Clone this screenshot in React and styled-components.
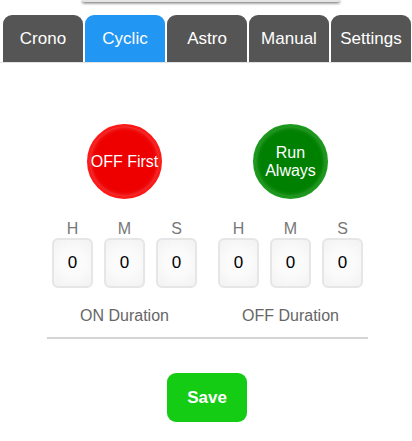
import React from 'react';
import styled, { createGlobalStyle } from 'styled-components';

const GlobalStyle = createGlobalStyle`
  html, body {
    margin: 0;
    padding: 0;
    background: #fff;
    font-family: "Liberation Sans", Arial, sans-serif;
  }
`;

const Page = styled.div`
  width: 412px;
  min-height: 441px;
  overflow: hidden;
`;

const TopBar = styled.div`
  margin-left: 82px;
  width: 258px;
  height: 2px;
  background: #e4e4e4;
  border-radius: 0 0 6px 6px;
  box-shadow: 0 1px 3px rgba(0, 0, 0, 0.75);
`;

const TabBar = styled.div`
  display: flex;
  gap: 2px;
  padding-left: 3px;
  margin-top: 13px;
  border-bottom: 1px solid #e2e2e2;
`;

const Tab = styled.div`
  width: 80px;
  height: 47px;
  flex: none;
  display: flex;
  align-items: center;
  justify-content: center;
  background: ${(p) => (p.$active ? '#2196f3' : '#555555')};
  color: #fff;
  font-size: 17px;
  border-radius: 9px 9px 0 0;
`;

const Content = styled.div`
  display: flex;
  flex-direction: column;
  align-items: center;
  padding-top: 61px;
`;

const Columns = styled.div`
  display: flex;
  gap: 21px;
  margin-left: 3px;
`;

const Column = styled.div`
  width: 145px;
  display: flex;
  flex-direction: column;
  align-items: center;
`;

const Circle = styled.div`
  width: 75px;
  height: 75px;
  box-sizing: border-box;
  border-radius: 50%;
  display: flex;
  align-items: center;
  justify-content: center;
  text-align: center;
  color: #fff;
  font-size: 16px;
  line-height: 18px;
  background: ${(p) => p.$bg};
  border: 2px solid ${(p) => p.$ring};
  box-shadow: inset 0 0 4px 1px ${(p) => p.$glow};
  margin-bottom: 21px;
`;

const Fields = styled.div`
  display: flex;
  gap: 11px;
`;

const Field = styled.div`
  display: flex;
  flex-direction: column;
  align-items: center;
`;

const Unit = styled.span`
  font-size: 16px;
  line-height: 18px;
  color: #777;
`;

const Box = styled.div`
  width: 41px;
  height: 50px;
  box-sizing: border-box;
  border: 2px solid #e6e6e6;
  border-radius: 6px;
  background: radial-gradient(circle, #fbfbfb 40%, #f2f2f2 100%);
  display: flex;
  align-items: center;
  justify-content: center;
  font-size: 17px;
  color: #000;
`;

const Caption = styled.div`
  margin-top: 19px;
  font-size: 16px;
  line-height: 18px;
  color: #666;
`;

const Divider = styled.div`
  width: 321px;
  height: 2px;
  background: #d4d4d4;
  margin-top: 12px;
  margin-left: 3px;
`;

const SaveButton = styled.button`
  margin-top: 34px;
  margin-left: 2px;
  width: 80px;
  height: 49px;
  border: none;
  border-radius: 9px;
  background: #14cc14;
  color: #fff;
  font-family: inherit;
  font-size: 17px;
  font-weight: bold;
  cursor: pointer;
`;

const tabs = ['Crono', 'Cyclic', 'Astro', 'Manual', 'Settings'];

const TimeInputs = () => (
  <Fields>
    {['H', 'M', 'S'].map((u) => (
      <Field key={u}>
        <Unit>{u}</Unit>
        <Box>0</Box>
      </Field>
    ))}
  </Fields>
);

const App = () => (
  <Page>
    <GlobalStyle />
    <TopBar />
    <TabBar>
      {tabs.map((t) => (
        <Tab key={t} $active={t === 'Cyclic'}>
          {t}
        </Tab>
      ))}
    </TabBar>
    <Content>
      <Columns>
        <Column>
          <Circle $bg="#ee0000" $ring="#ff1a1a" $glow="rgba(255,140,140,0.55)">
            OFF First
          </Circle>
          <TimeInputs />
          <Caption>ON Duration</Caption>
        </Column>
        <Column>
          <Circle $bg="#008000" $ring="#1e9a1e" $glow="rgba(140,220,140,0.45)">
            Run
            <br />
            Always
          </Circle>
          <TimeInputs />
          <Caption>OFF Duration</Caption>
        </Column>
      </Columns>
      <Divider />
      <SaveButton>Save</SaveButton>
    </Content>
  </Page>
);

export default App;
